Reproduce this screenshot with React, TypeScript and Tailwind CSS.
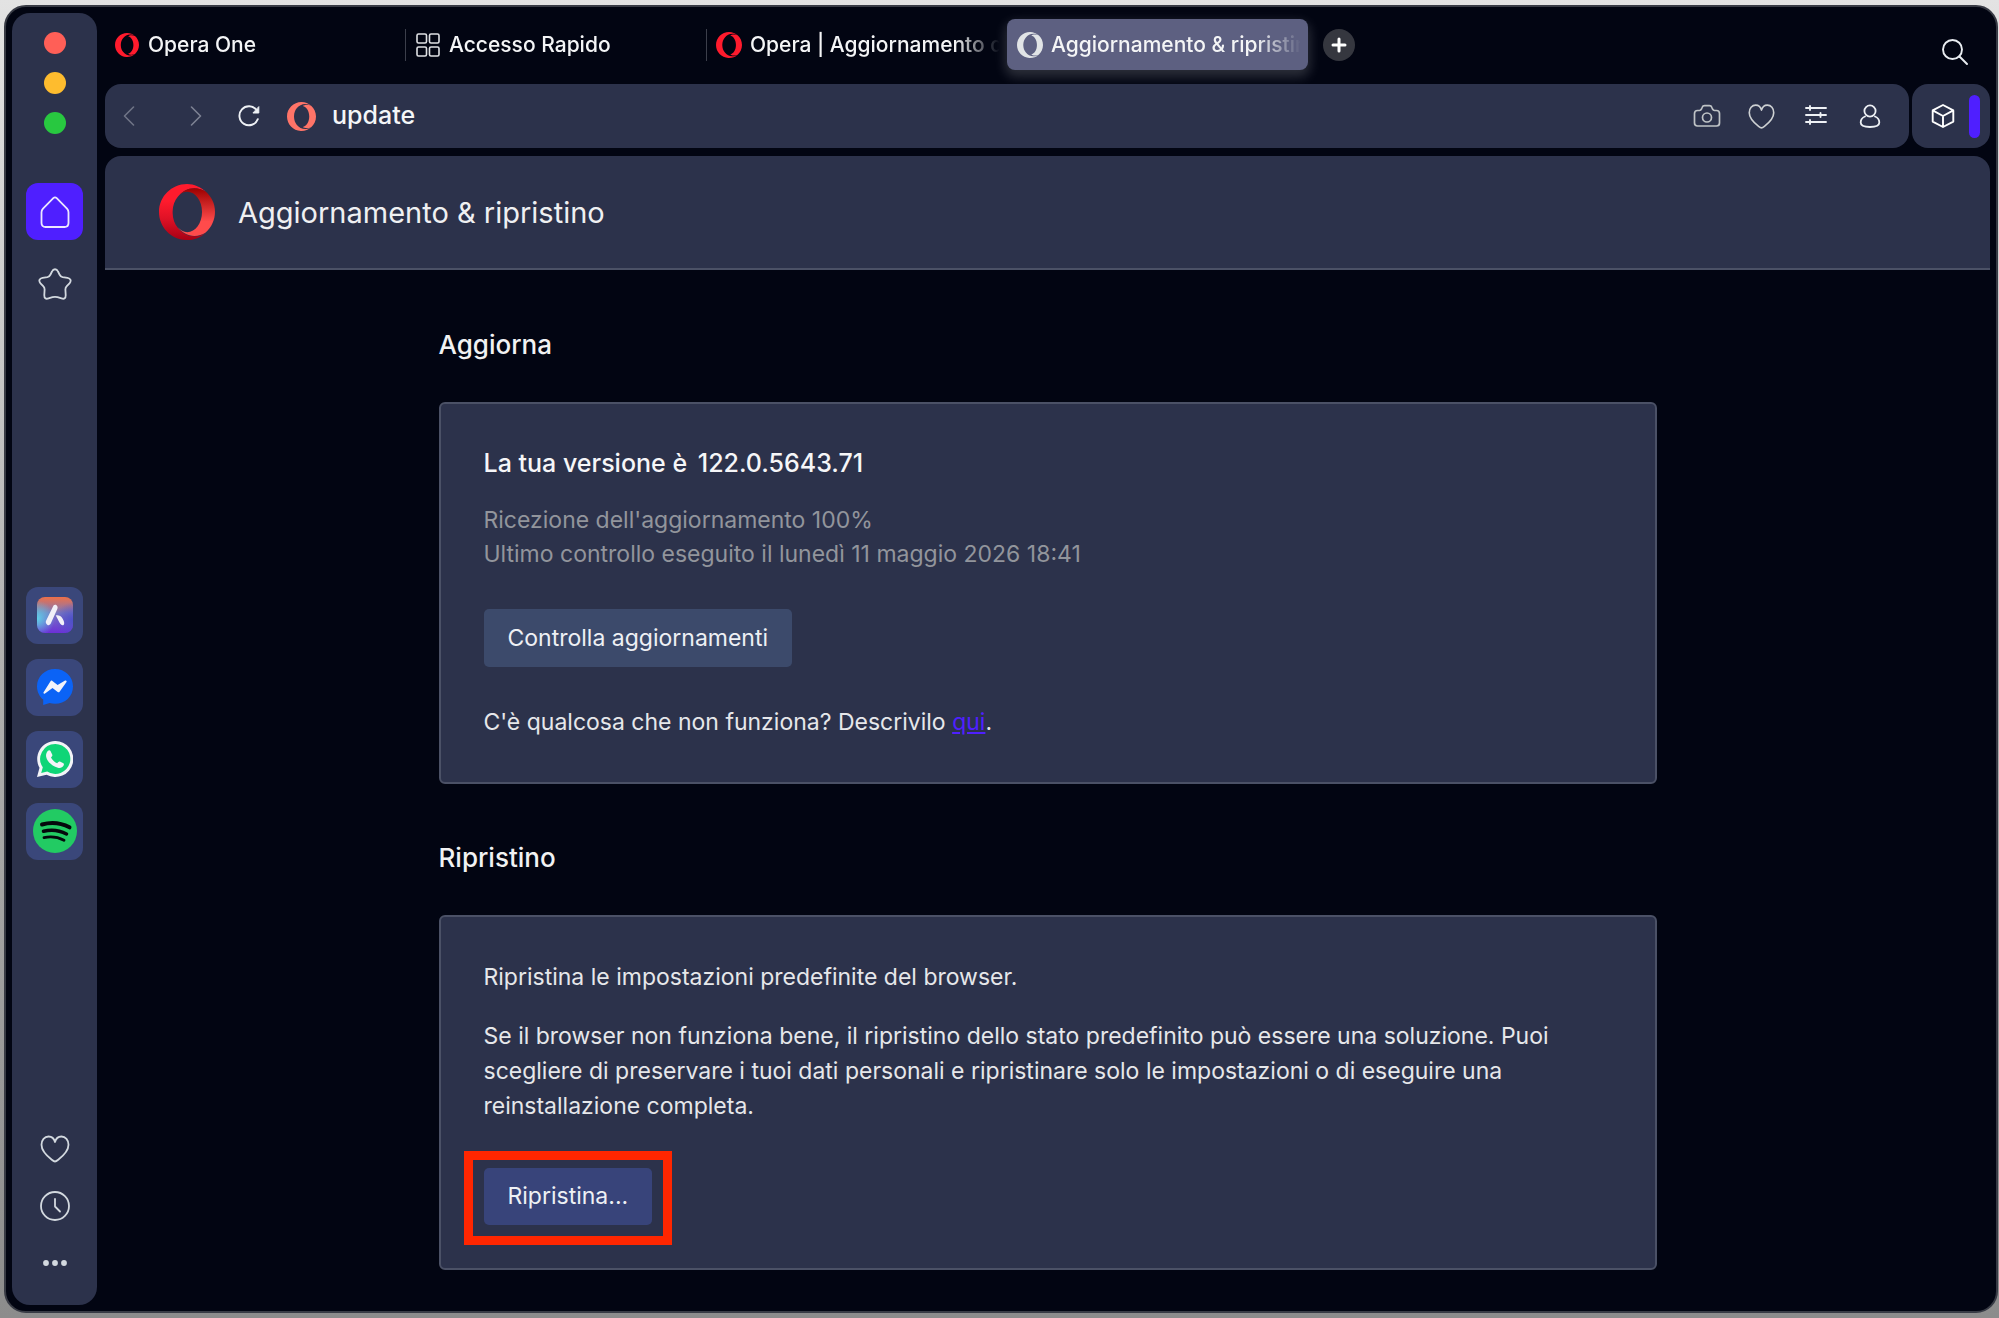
import type { ReactNode } from "react";

type IconProps = { className?: string };

function MiniOpera({ className }: IconProps) {
  return (
    <svg viewBox="0 0 24 24" className={className} fill="currentColor" aria-hidden="true">
      <path d="M8.051 5.238c-1.328 1.566-2.186 3.883-2.246 6.480v.564c.061 2.598.918 4.912 2.246 6.479 1.721 2.236 4.279 3.654 7.139 3.654 1.756 0 3.400-.537 4.807-1.471C17.879 22.846 15.074 24 12 24c-.192 0-.383-.004-.57-.014C5.064 23.689 0 18.436 0 12 0 5.371 5.373 0 12 0h.045c3.055.012 5.840 1.166 7.953 3.055-1.408-.93-3.051-1.471-4.810-1.471-2.858 0-5.417 1.420-7.140 3.654h.003z" />
      <path d="M24 12c0 3.556-1.545 6.748-4.002 8.945-3.078 1.500-5.946.451-6.896-.205 3.023-.664 5.307-4.320 5.307-8.740 0-4.422-2.283-8.075-5.307-8.740.949-.654 3.818-1.703 6.896-.205C22.455 5.250 24 8.445 24 12z" />
    </svg>
  );
}

function OperaLogo({ className }: IconProps) {
  return (
    <svg viewBox="0 0 75.600 75.600" className={className} aria-hidden="true">
      <defs>
        <linearGradient id="ringLeft" x1="0" y1="0" x2="0" y2="1">
          <stop offset="0.300" stopColor="#ff1b2d" />
          <stop offset="0.610" stopColor="#e01226" />
          <stop offset="1" stopColor="#a70014" />
        </linearGradient>
        <linearGradient id="ringRight" x1="0" y1="0" x2="0" y2="1">
          <stop offset="0" stopColor="#9c0000" />
          <stop offset="0.700" stopColor="#ff4b4b" />
        </linearGradient>
      </defs>
      <path
        fill="url(#ringLeft)"
        d="M37.800 0C16.900 0 0 16.900 0 37.800 0 58 16 74.700 36 75.600h1.800c9.700 0 18.500-3.600 25.200-9.600-4.400 2.900-9.600 4.600-15.200 4.600-9 0-17-4.400-22.400-11.500C21.200 54.200 18.500 47 18.400 39v-1.800c.1-8 2.800-15.200 7-20.100C30.800 10 38.800 5.600 47.800 5.600c5.500 0 10.700 1.700 15.200 4.600C56.300 4.200 47.600.1 37.900 0Z"
      />
      <path
        fill="url(#ringRight)"
        d="M25.400 17.100c3.400-4.100 7.900-6.500 12.800-6.500 11 0 19.900 12.200 19.900 27.200S49.200 65 38.200 65c-4.900 0-9.400-2.400-12.800-6.500 5.400 7.100 13.400 11.600 22.400 11.600 5.500 0 10.700-1.700 15.200-4.600 7.700-6.900 12.600-17 12.600-28.100S70.700 17.100 63 10.200c-4.400-2.900-9.600-4.600-15.200-4.600-9 0-17 4.400-22.400 11.500Z"
      />
    </svg>
  );
}

function Stroke({ className, children, box = 24, width = 1.5 }: IconProps & { children: ReactNode; box?: number; width?: number }) {
  return (
    <svg
      viewBox={`0 0 ${box} ${box}`}
      className={className}
      fill="none"
      stroke="currentColor"
      strokeWidth={width}
      strokeLinecap="round"
      strokeLinejoin="round"
      aria-hidden="true"
    >
      {children}
    </svg>
  );
}

const HEART = "M16 28.500c-1 0-2-.7-3.200-1.700C7 22.300 2.500 18 2.500 11.800 2.500 7 5.500 3.500 9.600 3.500c3 0 5.400 1.800 6.400 5.500 1-3.700 3.400-5.500 6.400-5.500 4.100 0 7.100 3.500 7.100 8.300 0 6.200-4.500 10.500-10.300 15-1.200 1-2.200 1.700-3.200 1.700Z";

function Heart({ className }: IconProps) {
  return (
    <Stroke className={className} box={32} width={1.8}>
      <path d={HEART} />
    </Stroke>
  );
}

function Speed({ className }: IconProps) {
  return (
    <Stroke className={className} width={1.6}>
      <rect x="1" y="1" width="9.500" height="9" rx="1.500" />
      <rect x="13.500" y="1" width="9.500" height="9" rx="1.500" />
      <rect x="1" y="14" width="9.500" height="9" rx="1.500" />
      <rect x="13.500" y="14" width="9.500" height="9" rx="1.500" />
    </Stroke>
  );
}

function Tab({ icon, title, divider, active }: { icon: ReactNode; title: string; divider?: boolean; active?: boolean }) {
  return (
    <button
      type="button"
      role="tab"
      aria-selected={!!active}
      className={
        active
          ? "flex h-[51px] w-[301px] items-center rounded-lg bg-[#5d6081] pr-2 pl-[10px] shadow-[0_5px_12px_2px_rgba(255,255,255,0.17)]"
          : "flex h-[51px] w-[301px] items-center pr-2"
      }
    >
      {!active && <span className={divider ? "mr-[9px] h-8 w-px shrink-0 bg-[#3c3f4b]" : "mr-[9px] h-8 w-px shrink-0"} />}
      <span className="flex w-[26px] shrink-0 justify-center">{icon}</span>
      <span className="ml-2 flex-1 overflow-hidden text-left text-[21px] leading-8 font-medium whitespace-nowrap text-[#f4f5f6] [mask-image:linear-gradient(to_right,#000_205px,transparent_250px)]">
        {title}
      </span>
    </button>
  );
}

function AppTile({ label, children }: { label: string; children: ReactNode }) {
  return (
    <button type="button" aria-label={label} className="flex size-[57px] items-center justify-center rounded-xl bg-[#3a477a]">
      {children}
    </button>
  );
}

function Sidebar() {
  return (
    <nav aria-label="Barra laterale" className="flex w-[85px] shrink-0 flex-col items-center rounded-[18px] bg-[#2c324b] pt-[19px] pb-[14px] text-[#d3d9df]">
      <div className="flex flex-col gap-[18px]">
        <button type="button" aria-label="Chiudi" className="size-[22px] rounded-full bg-[#ff5f57]" />
        <button type="button" aria-label="Riduci" className="size-[22px] rounded-full bg-[#febc2e]" />
        <button type="button" aria-label="Ingrandisci" className="size-[22px] rounded-full bg-[#28c840]" />
      </div>
      <div className="mt-[49px] flex flex-col gap-[15px]">
        <button type="button" aria-label="Home" className="flex size-[57px] items-center justify-center rounded-xl bg-[#4f1fff] text-[#ece8ff]">
          <Stroke className="size-8" box={32} width={1.8}>
            <path d="M2.500 16.200c0-1.400.4-2.300 1.500-3.500L14.300 2.200c1.100-1.100 2.300-1.100 3.400 0L28 12.700c1.100 1.200 1.500 2.100 1.500 3.500V27c0 2.600-1.400 4-4 4h-19c-2.600 0-4-1.400-4-4Z" />
          </Stroke>
        </button>
        <button type="button" aria-label="Segnalibri" className="flex size-[57px] items-center justify-center">
          <Stroke className="size-[34px]" box={34} width={1.8}>
            <path d="M14 4.500C15.300 1.500 18.700 1.500 20 4.500L21.500 7.500C22.300 9.200 23 9.800 24.600 10.100L29.500 10.800C32.700 11.300 33.600 14 31.500 16.300L28.800 19.200C27.600 20.500 27.300 21.300 27.400 22.800L27.700 28C27.800 31.300 26.300 32.400 23.500 31.400L19.500 30.200C17.800 29.700 16.200 29.700 14.500 30.200L10.500 31.400C7.700 32.400 6.200 31.300 6.300 28L6.600 22.800C6.700 21.300 6.400 20.500 5.200 19.200L2.500 16.300C.4 14 1.300 11.300 4.500 10.800L9.400 10.100C11 9.800 11.700 9.200 12.500 7.500Z" />
          </Stroke>
        </button>
      </div>
      <div className="my-auto flex flex-col gap-[15px] pt-[14px]">
        <AppTile label="Aria">
          <svg viewBox="0 0 36 36" className="size-9 rounded-lg" aria-hidden="true">
            <defs>
              <linearGradient id="ariaBase" x1="0" y1="0" x2="0" y2="1">
                <stop offset="0" stopColor="#ee7048" />
                <stop offset="0.450" stopColor="#7878c0" />
                <stop offset="1" stopColor="#6c2fd8" />
              </linearGradient>
              <radialGradient id="ariaCyan" cx="0" cy="0.600" r="0.500">
                <stop offset="0" stopColor="#5fd0e8" />
                <stop offset="1" stopColor="#5fd0e8" stopOpacity="0" />
              </radialGradient>
              <radialGradient id="ariaBlue" cx="1" cy="0.650" r="0.500">
                <stop offset="0" stopColor="#4c50c8" />
                <stop offset="1" stopColor="#4c50c8" stopOpacity="0" />
              </radialGradient>
            </defs>
            <rect width="36" height="36" fill="url(#ariaBase)" />
            <rect width="36" height="36" fill="url(#ariaCyan)" />
            <rect width="36" height="36" fill="url(#ariaBlue)" />
            <path fill="#f1f0f8" d="M16.500 8.600c1-1.300 3.300-.8 3.900.8.400 1 .2 1.900-.2 2.800L14 26c-1.100 2.600-3.400 3-4.800.4-.5-.9-.6-1.900 0-3Z" />
            <path fill="#f1f0f8" d="M18.800 18.400c2.600-.6 5.200.4 6.700 3 1.700 3 2.200 5.100 1.300 6.300-1.100 1.300-3 .5-4.200-1.900Z" />
          </svg>
        </AppTile>
        <AppTile label="Messenger">
          <svg viewBox="0 0 36 36" className="size-9" aria-hidden="true">
            <path fill="#0b63f6" d="M18 0c10 0 18 7.500 18 17.400S28 34.800 18 34.800c-1.900 0-3.700-.2-5.400-.7L6.200 36V30.600C2.400 27.300 0 22.700 0 17.400 0 7.500 8 0 18 0Z" />
            <path fill="#f2f3fa" d="M6.600 23.300 13.500 12.200c.5-.7 1.200-.8 1.900-.3l5.200 4 7.500-4.300c1-.6 2 .4 1.400 1.300L22.600 22.700c-.5.700-1.200.8-1.900.3l-5.200-4-7.500 5.400c-1 .7-2-.2-1.400-1.100Z" />
          </svg>
        </AppTile>
        <AppTile label="WhatsApp">
          <svg viewBox="0 0 36 36" className="size-9" aria-hidden="true">
            <path fill="#f3f4f8" d="M18 0a18 18 0 1 1-8.500 33.700L0 36l2.500-9.200A18 18 0 0 1 18 0Z" />
            <path fill="#0fd577" d="M18.200 2.900a15 15 0 1 1-8 27.600l-6 1.600 1.600-5.800A15 15 0 0 1 18.200 2.900Z" />
            <path fill="#f3f4f8" d="M11 9.700c.7-.7 2-.7 2.500.2l1.800 3.900c.3.800-.2 1.500-1.300 2.800 1.300 2.600 3.200 4.400 6.200 5.700 1.100-1.500 1.800-2.200 2.700-1.800l3.500 1.800c.7.400.7 1.300.2 2.300-1 2-3.500 2.700-5.700 2.100-6-1.500-10.500-6-11.700-10.800-.5-2.300.2-4.700 1.800-6.200Z" />
          </svg>
        </AppTile>
        <AppTile label="Spotify">
          <svg viewBox="0 0 44 44" className="size-11" aria-hidden="true">
            <circle cx="22" cy="22" r="22" fill="#22cb63" />
            <g fill="none" stroke="#05090c" strokeLinecap="round">
              <path strokeWidth="4" d="M9 15.500c9-2.500 19-1.600 27.500 2.800" />
              <path strokeWidth="3.500" d="M10.500 22.300c7.600-2 15.500-1.300 23 2.700" />
              <path strokeWidth="2.800" d="M11 28.700c6.500-1.400 13.500-.8 20 2.600" />
            </g>
          </svg>
        </AppTile>
      </div>
      <div className="flex flex-col">
        <button type="button" aria-label="Preferiti" className="flex size-[57px] items-center justify-center">
          <Heart className="size-8" />
        </button>
        <button type="button" aria-label="Cronologia" className="flex size-[57px] items-center justify-center">
          <Stroke className="size-[30px]" box={30} width={1.8}>
            <circle cx="15" cy="15" r="14" />
            <path d="M15 8v7.500l5 5" />
          </Stroke>
        </button>
        <button type="button" aria-label="Altro" className="flex size-[57px] items-center justify-center">
          <svg viewBox="0 0 24 24" className="size-6" fill="currentColor" aria-hidden="true">
            <circle cx="3" cy="12" r="2.900" />
            <circle cx="12" cy="12" r="2.900" />
            <circle cx="21" cy="12" r="2.900" />
          </svg>
        </button>
      </div>
    </nav>
  );
}

function TabBar() {
  return (
    <div className="flex h-[71px] items-start justify-between pt-[6px]">
      <div role="tablist" className="-ml-px flex">
        <Tab icon={<MiniOpera className="size-6 text-[#ff1b2d]" />} title="Opera One" />
        <Tab icon={<Speed className="size-6 text-[#dfe1e4]" />} title="Accesso Rapido" divider />
        <Tab icon={<MiniOpera className="size-[26px] text-[#ff1b2d]" />} title="Opera | Aggiornamento di" divider />
        <Tab icon={<MiniOpera className="size-[26px] text-[#e1e4e6]" />} title="Aggiornamento & ripristino" active />
        <button type="button" aria-label="Nuova scheda" className="mt-[10px] ml-[15px] flex size-8 items-center justify-center rounded-full bg-[#35373f] text-white">
          <Stroke className="size-4" box={16} width={3}>
            <path d="M8 2v12M2 8h12" />
          </Stroke>
        </button>
      </div>
      <button type="button" aria-label="Cerca" className="mt-5 mr-[22px] text-[#e8ecf0]">
        <Stroke className="size-[26px]" box={26} width={1.9}>
          <circle cx="10.500" cy="10.500" r="9.500" />
          <path d="m17.500 17.500 7.500 7.500" />
        </Stroke>
      </button>
    </div>
  );
}

function AddressBar() {
  return (
    <div className="flex h-16 gap-[3px]">
      <div className="flex flex-1 items-center rounded-2xl bg-[#2c324b] pr-[25px] pl-[14px] text-[#eef1f5]">
        <button type="button" aria-label="Indietro" className="text-[#6f7486]">
          <Stroke className="size-5" box={20} width={1.6}>
            <path d="M14.500 1 5.500 10l9 9" />
          </Stroke>
        </button>
        <button type="button" aria-label="Avanti" className="ml-[46px] text-[#7d8293]">
          <Stroke className="size-5" box={20} width={1.6}>
            <path d="m6.500 1 9 9-9 9" />
          </Stroke>
        </button>
        <button type="button" aria-label="Ricarica" className="ml-8">
          <Stroke className="size-6" width={1.9}>
            <path d="M20.800 15.200A9.500 9.500 0 1 1 19.500 6" />
            <path d="M21.800 3v6h-5.500Z" fill="currentColor" strokeWidth="1" />
          </Stroke>
        </button>
        <MiniOpera className="ml-[26px] size-[29px] text-[#ff7468]" />
        <input aria-label="Indirizzo" defaultValue="update" className="ml-4 min-w-0 flex-1 bg-transparent text-[25px] font-medium text-[#f4f6f8] outline-none" />
        <div className="flex items-center gap-[26px]">
          <button type="button" aria-label="Istantanea" className="text-[#bfc3c6]">
            <Stroke className="size-7" box={28} width={1.7}>
              <path d="M4.500 8.500h2c1 0 1.500-.4 1.900-1.300l.7-1.700c.4-1.100 1.200-1.800 2.500-1.800h4.800c1.300 0 2.100.7 2.500 1.800l.7 1.700c.4.900.9 1.300 1.900 1.300h2c2 0 3 1 3 3V21c0 2-1 3-3 3h-19c-2 0-3-1-3-3v-9.500c0-2 1-3 3-3Z" />
              <circle cx="14" cy="15.500" r="4.500" />
            </Stroke>
          </button>
          <button type="button" aria-label="Aggiungi ai preferiti" className="text-[#cdd0d2]">
            <Heart className="size-[29px]" />
          </button>
          <button type="button" aria-label="Configurazione rapida">
            <Stroke className="size-7" box={28} width={1.9}>
              <path d="M4 6h20M4 13h20M4 20h20M8 4v4M18.500 11v4M8 18v4" />
            </Stroke>
          </button>
          <button type="button" aria-label="Profilo">
            <Stroke className="size-7" box={28} width={1.8}>
              <circle cx="14" cy="9" r="5.600" />
              <path d="M9 14.500c-2.600 1-4.300 3.300-4.300 6 0 3 2 4.500 9.300 4.500s9.300-1.500 9.300-4.500c0-2.700-1.700-5-4.300-6" />
            </Stroke>
          </button>
        </div>
      </div>
      <div className="flex w-[78px] items-center justify-between rounded-2xl bg-[#2c324b] pr-[10px] pl-[18px]">
        <button type="button" aria-label="Estensioni" className="text-white">
          <Stroke className="size-[26px]" box={26} width={1.9}>
            <path d="m13 2 10.300 5.400v11.200L13 24 2.700 18.600V7.400ZM2.700 7.400 13 13l10.300-5.600M13 13v11" />
          </Stroke>
        </button>
        <span className="h-[43px] w-[11px] rounded-full bg-[#4f1fff]" />
      </div>
    </div>
  );
}

function Section({ title, children }: { title: string; children: ReactNode }) {
  return (
    <section>
      <h2 className="mb-[41px] text-[26px] leading-8 font-medium text-[#f1f2f3]">{title}</h2>
      <div className="rounded-md border-2 border-[#4b5166] bg-[#2c324b] px-[43px] text-[23px] leading-[35px] text-[#e6e7ea]">{children}</div>
    </section>
  );
}

function Page() {
  return (
    <main className="mt-2 flex-1">
      <header className="flex h-[114px] items-center gap-[23px] rounded-t-2xl border-b-2 border-[#4b5166] bg-[#2c324b] pl-[54px]">
        <OperaLogo className="size-[56px]" />
        <h1 className="pt-[2px] text-[29px] leading-10 text-[#eff0f2]">Aggiornamento &amp; ripristino</h1>
      </header>
      <div className="mx-auto mt-[59px] flex w-[1218px] max-w-full flex-col gap-[58px]">
        <Section title="Aggiorna">
          <p className="pt-[41px] text-[25px] leading-9 font-medium text-[#f6f6f8]">
            La tua versione è <span className="ml-1">122.0.5643.71</span>
          </p>
          <p className="mt-[22px] leading-[34px] text-[#92959c]">
            Ricezione dell'aggiornamento 100%
            <br />
            Ultimo controllo eseguito il lunedì 11 maggio 2026 18:41
          </p>
          <button type="button" className="mt-[38px] block h-[58px] rounded-[5px] bg-[#3c4a6b] px-6 text-[#eef0f4]">
            Controlla aggiornamenti
          </button>
          <p className="mt-[38px] pb-[42px]">
            C'è qualcosa che non funziona? Descrivilo{" "}
            <a href="#segnala" className="text-[#4f1fff] underline">
              qui
            </a>
            .
          </p>
        </Section>
        <Section title="Ripristino">
          <p className="pt-[43px]">Ripristina le impostazioni predefinite del browser.</p>
          <p className="mt-6">
            Se il browser non funziona bene, il ripristino dello stato predefinito può essere una soluzione. Puoi scegliere di preservare i tuoi dati personali e
            ripristinare solo le impostazioni o di eseguire una reinstallazione completa.
          </p>
          <div className="relative mt-[44px] mb-[43px] w-fit">
            <button type="button" className="block h-[57px] rounded-[5px] bg-[#38447a] px-6 text-[#eef0f4]">
              Ripristina...
            </button>
            <span className="pointer-events-none absolute -inset-x-5 -top-[17px] -bottom-5 border-[9px] border-[#ff2600]" />
          </div>
        </Section>
      </div>
    </main>
  );
}

export default function App() {
  return (
    <div className="flex min-h-screen bg-linear-to-b from-[#e3e3e3] via-[#b0b0b0] to-[#8c8c8c] pt-[5px] pr-px pb-[5px] pl-1 font-['Inter',sans-serif]">
      <div className="flex min-w-0 flex-1 gap-2 rounded-[22px] border-2 border-[#383b45] bg-[#020512] p-[6px]">
        <Sidebar />
        <div className="flex min-w-0 flex-1 flex-col">
          <TabBar />
          <AddressBar />
          <Page />
        </div>
      </div>
    </div>
  );
}
